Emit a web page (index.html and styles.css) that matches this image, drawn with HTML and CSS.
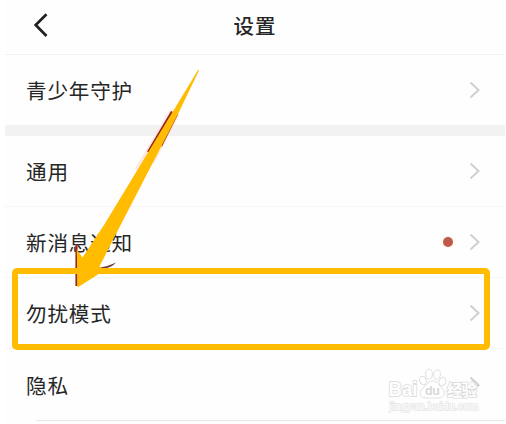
FILE: index.html
```html
<!DOCTYPE html>
<html lang="zh-CN">
<head>
  <meta charset="UTF-8" />
  <meta name="viewport" content="width=device-width, initial-scale=1.0" />
  <title>设置</title>
  <link rel="stylesheet" href="styles.css">
</head>
<body>
  <div class="screen">
    <header class="topbar">
      <svg class="back" viewBox="0 0 16 26"><path d="M14.500 2.200 3.700 13 14.500 24" /></svg>
      <h1>设置</h1>
    </header>
    <ul class="group first">
      <li class="row">
        <span class="label">青少年守护</span>
        <svg class="chevron" viewBox="0 0 12 18"><path d="M1.500 1.500 9.500 9 1.500 16.500" /></svg>
      </li>
    </ul>
    <ul class="group">
      <li class="row">
        <span class="label">通用</span>
        <svg class="chevron" viewBox="0 0 12 18"><path d="M1.500 1.500 9.500 9 1.500 16.500" /></svg>
      </li>
      <li class="row">
        <span class="label">新消息通知</span>
        <span class="dot"></span>
        <svg class="chevron" viewBox="0 0 12 18"><path d="M1.500 1.500 9.500 9 1.500 16.500" /></svg>
      </li>
      <li class="row">
        <span class="label">勿扰模式</span>
        <svg class="chevron" viewBox="0 0 12 18"><path d="M1.500 1.500 9.500 9 1.500 16.500" /></svg>
      </li>
      <li class="row last">
        <span class="label">隐私</span>
        <svg class="chevron" viewBox="0 0 12 18"><path d="M1.500 1.500 9.500 9 1.500 16.500" /></svg>
      </li>
    </ul>
  </div>

  <!-- pointer and highlight box drawn over the list -->
  <svg class="pointer" viewBox="0 0 506 424">
    <path class="glow" d="M172 111 137 170M177 114 152 162" />
    <path class="mark" d="M172 111.500 148 152M177 114 161 146" />
    <path class="mark" d="M76.500 244V286" />
    <path class="swoosh" d="M97 268Q106 267 116 262.500Q112 267 104 269Z" />
    <path class="arrow" d="M198 70 199 70.500 178 114 116.500 233 99.500 266.500 105 270 77.500 287.500 76.800 249.500 82.500 257.500 104 225 172 113Z" />
  </svg>
  <div class="highlight"></div>

  <svg class="watermark" viewBox="0 0 100 50">
    <g class="paw">
      <ellipse cx="37" cy="13.500" rx="3.300" ry="4.300" transform="rotate(-18 37 13.500)" />
      <ellipse cx="43" cy="7" rx="3.300" ry="4.800" />
      <ellipse cx="51" cy="7.500" rx="3.300" ry="4.800" transform="rotate(8 51 7.500)" />
      <ellipse cx="56.500" cy="14.500" rx="3.300" ry="4.300" transform="rotate(18 56.500 14.500)" />
      <path d="M46.500 14C41 14 40 19 37 21C32 25 34 31 40 31H52C59 31 60 25 56 21C53 19 52 14 46.500 14Z" />
    </g>
    <text class="brand" x="2.500" y="29" textLength="29" lengthAdjust="spacingAndGlyphs">Bai</text>
    <text class="du" x="39" y="28" textLength="15">du</text>
    <text class="brand cn" x="61" y="29" textLength="30">经验</text>
    <text class="site" x="3.500" y="42.500" textLength="89" lengthAdjust="spacingAndGlyphs">jingyan.baidu.com</text>
  </svg>
</body>
</html>
```
FILE: styles.css
```css
body {
  margin: 0;
  position: relative;
  width: 506px;
  height: 424px;
  overflow: hidden;
  background: #fff;
  color: #262626;
  font-family: 'Noto Sans CJK SC', 'Noto Sans', sans-serif;
}

.screen {
  width: 500px;
  height: 424px;
  margin-left: 5px;
  background: #fefefe;
}

.topbar {
  display: grid;
  grid-template-columns: 60px 1fr 60px;
  align-items: center;
  box-sizing: border-box;
  height: 55px;
  padding-bottom: 5px;
  border-bottom: 1px solid #f1f1f1;
}

.back {
  width: 16px;
  height: 26px;
  margin-left: 27px;
  fill: none;
  stroke: #202020;
  stroke-width: 2.7;
}

h1 {
  margin: 0;
  text-align: center;
  font-size: 20.5px;
  line-height: 30px;
  font-weight: 500;
  letter-spacing: 0.9px;
}

.group {
  margin: 0;
  padding: 0;
  list-style: none;
}

.group.first {
  border-bottom: 11px solid #f2f2f2;
}

.row {
  display: flex;
  align-items: center;
  box-sizing: border-box;
  height: 71px;
  padding: 0 24px 0 21px;
  border-bottom: 1px solid #f6f6f6;
}

.first .row {
  height: 70px;
  padding-bottom: 1px;
  border-bottom: none;
}

.last {
  height: 73px;
  padding-bottom: 2px;
  border-bottom: none;
  background: linear-gradient(#e6e6e6, #e6e6e6) 31px 71px / 469px 1px no-repeat;
}

.label {
  flex: 1;
  font-size: 20.6px;
  line-height: 30px;
  letter-spacing: 0.8px;
}

.chevron {
  width: 12px;
  height: 18px;
  fill: none;
  stroke: #d0d0d0;
  stroke-width: 2;
}

.dot {
  width: 10px;
  height: 10px;
  margin-right: 16px;
  border-radius: 50%;
  background: #bd5a4b;
  box-shadow: 0 0 4px #fbe9df;
}

.highlight {
  position: absolute;
  left: 11.5px;
  top: 268px;
  box-sizing: border-box;
  width: 478px;
  height: 82px;
  border: 6px solid #ffbc00;
  border-radius: 5px;
}

.pointer {
  position: absolute;
  left: 0;
  top: 0;
  width: 506px;
  height: 424px;
}

.arrow {
  fill: #ffbc00;
}

.mark {
  fill: none;
  stroke: #96281f;
  stroke-width: 2.2;
}

.glow {
  fill: none;
  stroke: #ffd9d2;
  stroke-width: 5;
  opacity: 0.6;
}

.swoosh {
  fill: #6b3a3a;
}

.watermark {
  position: absolute;
  left: 386px;
  top: 367px;
  width: 100px;
  height: 50px;
}

.paw {
  fill: #fff;
  stroke: #e0e0e0;
  stroke-width: 1;
}

.brand {
  fill: #fff;
  stroke: #dadada;
  stroke-width: 1.6;
  paint-order: stroke;
  font: bold 20px 'Liberation Sans', sans-serif;
}

.cn {
  font: bold 15.5px 'Noto Sans CJK SC', sans-serif;
}

.du {
  fill: #d8d8d8;
  font: bold 12.5px 'Liberation Sans', sans-serif;
}

.site {
  fill: #fff;
  stroke: #e4e4e4;
  stroke-width: 1.4;
  paint-order: stroke;
  font: 11px 'Liberation Sans', sans-serif;
}
```
